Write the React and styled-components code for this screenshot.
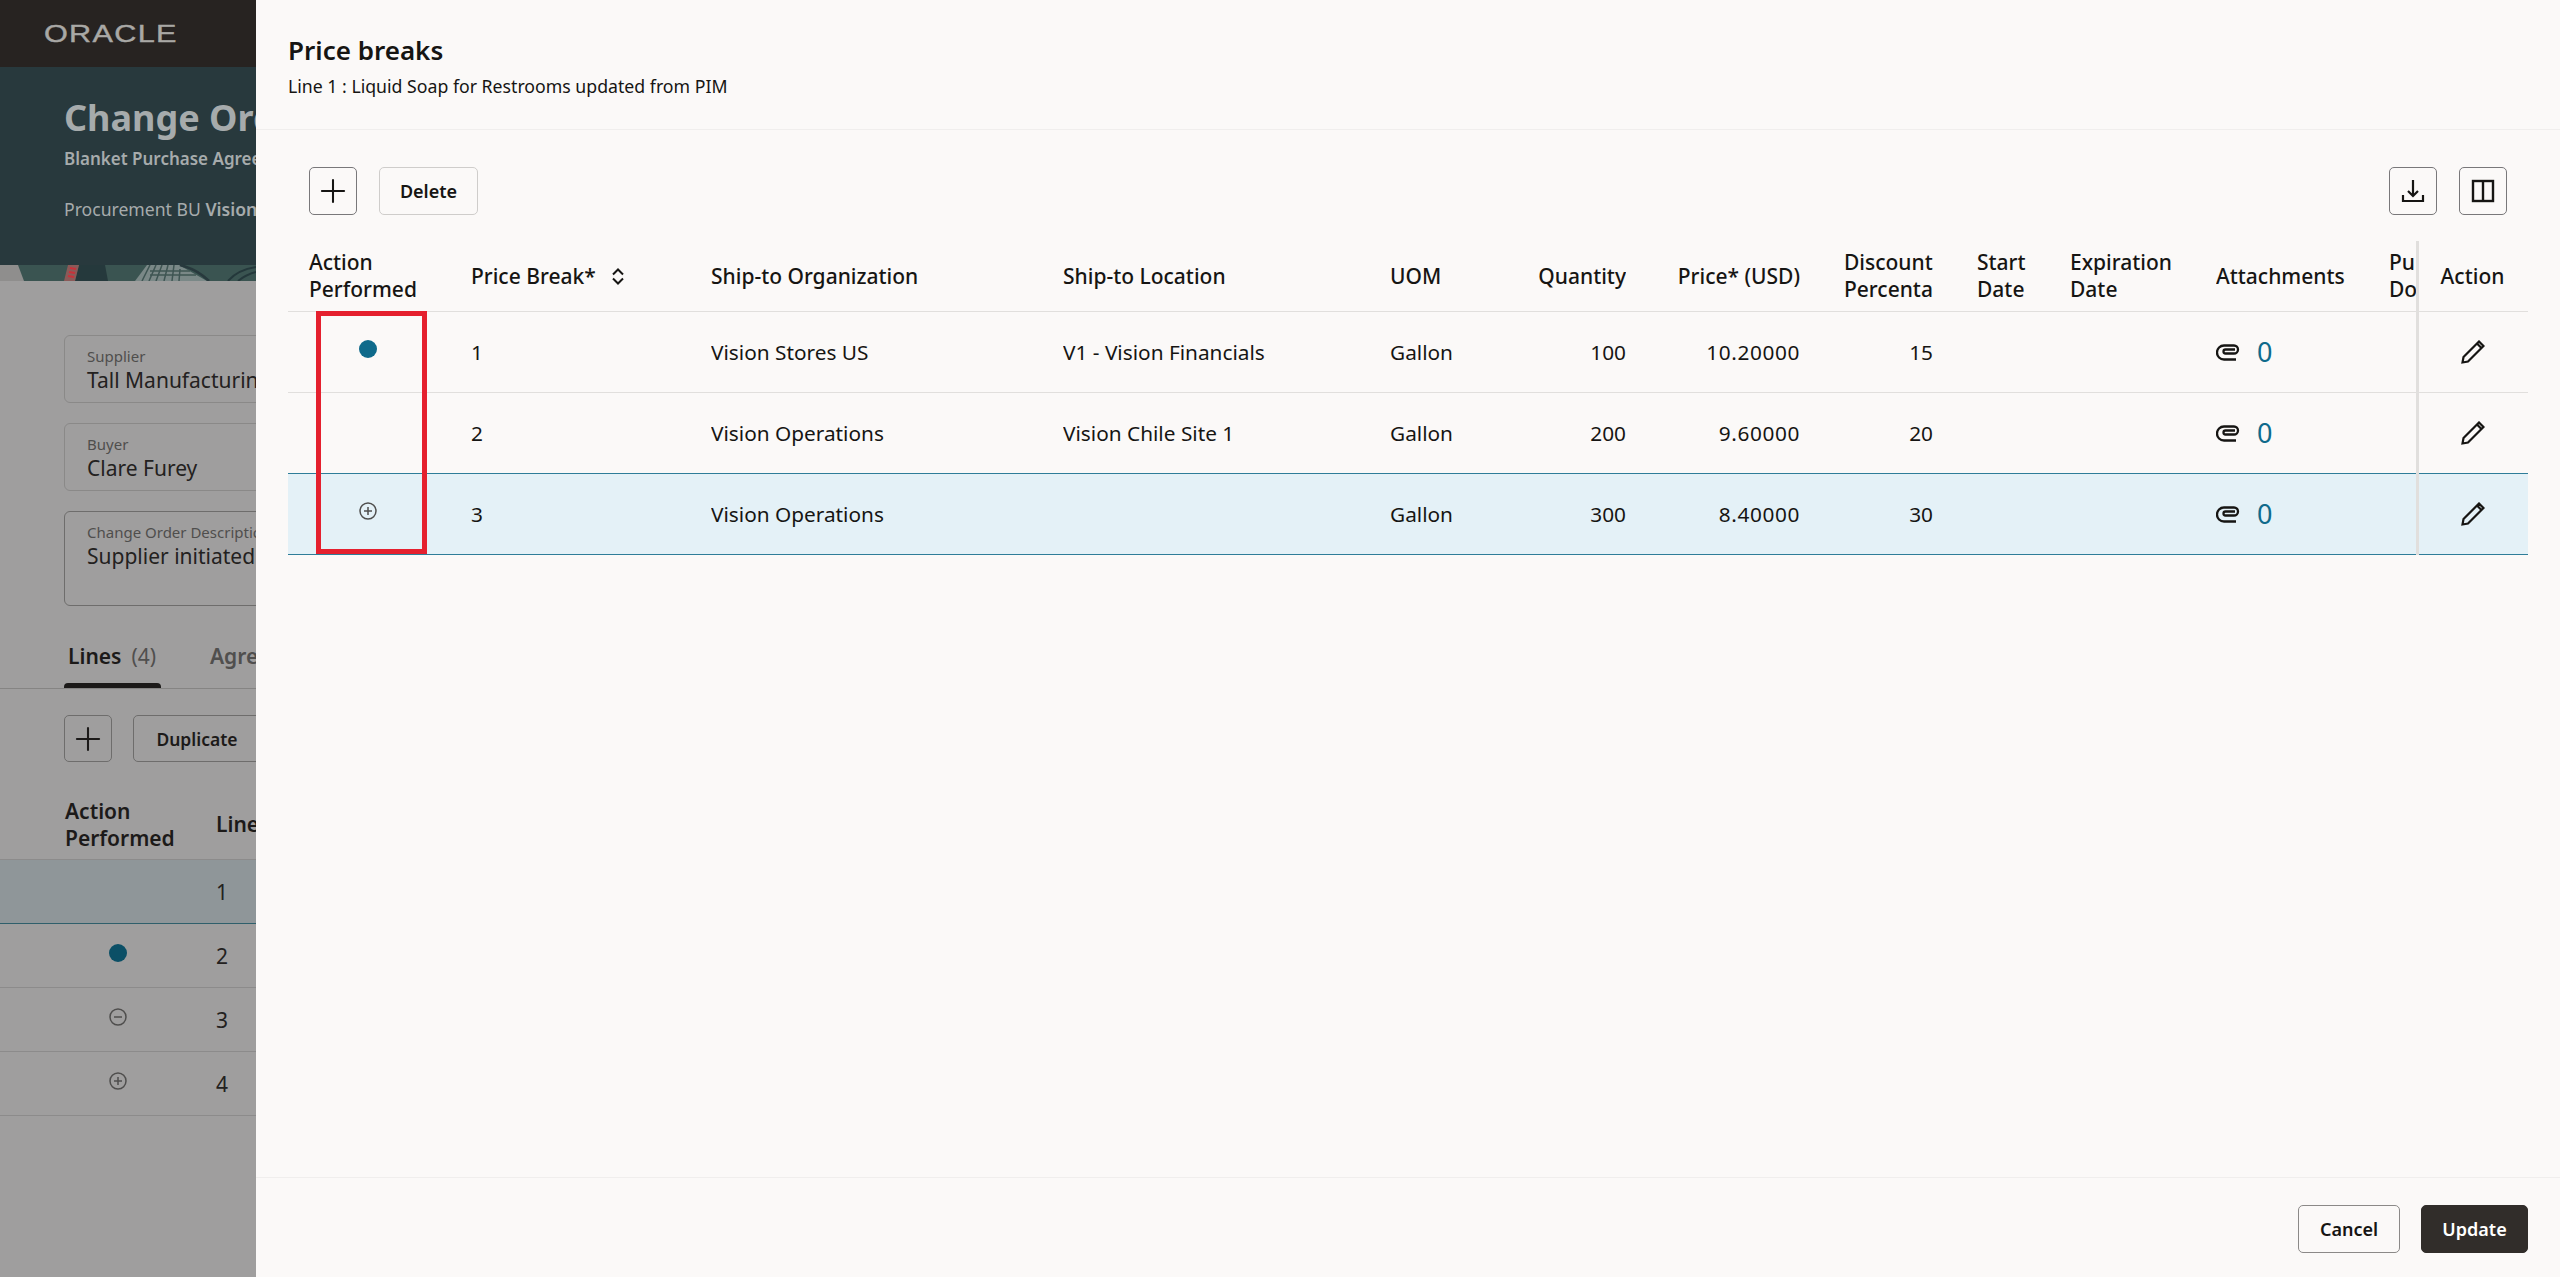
import React from "react";
import styled, { createGlobalStyle } from "styled-components";
import { Plus } from "lucide-react";

const FONT = `"Noto Sans", "Open Sans", "Liberation Sans", sans-serif`;

const GlobalStyle = createGlobalStyle`
  html, body {
    margin: 0;
    padding: 0;
    background: #9f9e9e;
  }
  body {
    font-family: ${FONT};
    color: #161513;
  }
  * {
    box-sizing: border-box;
  }
`;

const Page = styled.div`
  position: relative;
  width: 2560px;
  height: 1277px;
  overflow: hidden;
  background: #9f9e9e;
`;

// dimmed page behind the drawer
const TopBar = styled.div`
  height: 67px;
  background: #272321;
  display: flex;
  align-items: center;
  padding: 2px 0 0 44px;
`;

const Logo = styled.span`
  display: inline-block;
  font-family: "Liberation Sans", sans-serif;
  font-size: 23px;
  line-height: 23px;
  letter-spacing: 1px;
  color: #a9a8a5;
  -webkit-text-stroke: 0.4px #a9a8a5;
  transform: scaleX(1.33);
  transform-origin: left center;
`;

const Hero = styled.div`
  height: 198px;
  background: #28393d;
  padding: 28px 0 0 64px;
  color: #a6abac;
`;

const HeroTitle = styled.div`
  font-size: 36px;
  line-height: 46px;
  font-weight: 700;
  white-space: nowrap;
`;

const HeroSub = styled.div`
  font-size: 17px;
  line-height: 24px;
  font-weight: 600;
  margin-top: 6px;
  white-space: nowrap;
`;

const HeroMeta = styled.div`
  font-size: 17.6px;
  line-height: 24px;
  margin-top: 26px;
  white-space: nowrap;

  b {
    font-weight: 600;
  }
`;

const Strip = styled.svg`
  display: block;
  width: 256px;
  height: 16px;
`;

const Form = styled.div`
  display: flex;
  flex-direction: column;
  gap: 20px;
  padding: 54px 0 0 64px;
`;

const Field = styled.div`
  width: 400px;
  height: ${(p) => p.$h}px;
  border: 1px solid ${(p) => (p.$dark ? "#6e6d6c" : "#8a8988")};
  border-radius: 6px;
  padding: 10px 22px;
`;

const FieldLabel = styled.div`
  font-size: 15px;
  line-height: 20px;
  color: #4f4e4d;
  white-space: nowrap;
`;

const FieldValue = styled.div`
  font-size: 21px;
  line-height: 28px;
  color: #232120;
  white-space: nowrap;
`;

const Tabs = styled.div`
  margin-top: 24px;
  height: 59px;
  display: flex;
  gap: 45px;
  padding: 11px 0 0 64px;
  border-bottom: 1px solid #858483;
`;

const Tab = styled.div`
  position: relative;
  padding: 0 4px;
  font-size: 21px;
  line-height: 30px;
  font-weight: 600;
  color: ${(p) => (p.$active ? "#1c1a19" : "#504f4e")};
  width: ${(p) => (p.$active ? "97px" : "auto")};
  white-space: nowrap;

  span {
    font-weight: 400;
    color: #504f4e;
    margin-left: 10px;
  }

  ${(p) =>
    p.$active &&
    `&:after {
      content: "";
      position: absolute;
      left: 0;
      right: 0;
      bottom: 0;
      height: 5px;
      border-radius: 4px 4px 0 0;
      background: #1c1a19;
    }`}
`;

const BackToolbar = styled.div`
  display: flex;
  gap: 21px;
  padding: 26px 0 0 64px;
`;

const BackButton = styled.div`
  display: flex;
  align-items: center;
  justify-content: center;
  height: 47px;
  width: ${(p) => p.$w}px;
  border: 1px solid #6e6d6c;
  border-radius: 5px;
  font-size: 17.5px;
  font-weight: 600;
  color: #1c1a19;
`;

const BackTable = styled.div`
  margin-top: 28px;
`;

const BackHead = styled.div`
  display: grid;
  grid-template-columns: 151px 1fr;
  align-items: center;
  height: 70px;
  padding-left: 65px;
  font-size: 21px;
  line-height: 27px;
  font-weight: 600;
  color: #1c1a19;
  border-bottom: 1px solid #8c8b8b;
`;

const BackRow = styled.div`
  display: grid;
  grid-template-columns: 216px 40px;
  align-items: center;
  height: 64px;
  background: ${(p) => (p.$sel ? "#8f9699" : "transparent")};
  border-bottom: 1px solid ${(p) => (p.$sel ? "#2f5f6b" : "#8c8b8b")};
  font-size: 21px;
  color: #232120;
`;

const BackMark = styled.div`
  display: flex;
  justify-content: center;
  padding: 0 0 6px 20px;
`;

// drawer
const Drawer = styled.div`
  position: absolute;
  top: 0;
  left: 256px;
  right: 0;
  bottom: 0;
  display: flex;
  flex-direction: column;
  background: #fbf9f8;
`;

const DrawerHeader = styled.div`
  height: 130px;
  padding: 32px 32px 0;
  border-bottom: 1px solid #f0eeed;
`;

const Title = styled.div`
  font-size: 26px;
  line-height: 36px;
  font-weight: 600;
`;

const Subtitle = styled.div`
  font-size: 17.7px;
  line-height: 25px;
  margin-top: 6px;
`;

const DrawerBody = styled.div`
  flex: 1;
  padding: 37px 32px 0;
`;

const Toolbar = styled.div`
  display: flex;
  align-items: center;
  gap: 22px;
  padding: 0 21px;
`;

const Spacer = styled.div`
  flex: 1;
`;

const IconButton = styled.button`
  display: flex;
  align-items: center;
  justify-content: center;
  width: 48px;
  height: 48px;
  padding: 0;
  background: transparent;
  border: 1px solid #79787a;
  border-radius: 5px;
  color: #161513;
`;

const TextButton = styled.button`
  height: 48px;
  width: ${(p) => p.$w}px;
  padding: 0;
  font-family: ${FONT};
  font-size: 18px;
  font-weight: 600;
  border-radius: 5px;
  border: 1px solid ${(p) => (p.$quiet ? "#cfcdcb" : "#8b8988")};
  background: ${(p) => (p.$primary ? "#312d2a" : "transparent")};
  color: ${(p) => (p.$primary ? "#fff" : "#161513")};
  ${(p) => p.$primary && "border-color: #312d2a;"}
`;

const COLS = "183px 240px 352px 327px 136px 100px 174px 133px 137px 146px 173px 28px 111px";

const Table = styled.div`
  position: relative;
  margin-top: 26px;
  width: 2240px;
`;

const HeadRow = styled.div`
  display: grid;
  grid-template-columns: ${COLS};
  align-items: center;
  height: 71px;
  border-bottom: 1px solid #e1dfdd;
  font-size: 21px;
  line-height: 27px;
  font-weight: 500;
`;

const BodyRow = styled.div`
  display: grid;
  grid-template-columns: ${COLS};
  align-items: center;
  height: 81px;
  font-size: 20.8px;
  border-bottom: 1px solid ${(p) => (p.$sel ? "#2e7d99" : "#e1dfdd")};
  background: ${(p) => (p.$sel ? "#e4f1f7" : "transparent")};
  ${(p) => p.$sel && "box-shadow: 0 -1px 0 #2e7d99;"}
`;

const Cell = styled.div`
  padding-left: ${(p) => p.$pl ?? 0}px;
  text-align: ${(p) => (p.$right ? "right" : "left")};
  overflow: hidden;
  white-space: ${(p) => (p.$wrap ? "normal" : "nowrap")};
`;

const PriceCell = styled(Cell)`
  letter-spacing: 0.6px;
`;

const ActionCell = styled.div`
  display: flex;
  justify-content: center;
`;

const SortCell = styled(Cell)`
  display: flex;
  align-items: center;
  gap: 16px;
`;

const MarkCell = styled.div`
  display: flex;
  justify-content: center;
  padding: 0 0 6px 0;
  width: 160px;
`;

const Dot = styled.span`
  display: block;
  width: ${(p) => p.$size}px;
  height: ${(p) => p.$size}px;
  border-radius: 50%;
  background: ${(p) => p.$color};
`;

const AttachCell = styled(Cell)`
  display: flex;
  align-items: center;
  gap: 17px;
`;

const Count = styled.span`
  font-size: 27px;
  line-height: 32px;
  color: #0f6a8b;
`;

const StickyLine = styled.div`
  position: absolute;
  top: 0;
  bottom: 0;
  left: 2128px;
  width: 3px;
  background: #e1dfdd;
`;

const Highlight = styled.div`
  position: absolute;
  left: 28px;
  top: 70px;
  width: 111px;
  height: 243px;
  border: 5px solid #e5202e;
`;

const DrawerFooter = styled.div`
  height: 100px;
  display: flex;
  justify-content: flex-end;
  gap: 21px;
  padding: 27px 32px 0;
  border-top: 1px solid #f0eeed;
`;

const PlusCircle = ({ size = 18, color = "#4f4e4d" }) => (
  <svg width={size} height={size} viewBox="0 0 18 18" fill="none" stroke={color} strokeWidth="1.5">
    <circle cx="9" cy="9" r="8" />
    <path d="M9 5v8M5 9h8" />
  </svg>
);

const MinusCircle = ({ color = "#4f4e4d" }) => (
  <svg width="18" height="18" viewBox="0 0 18 18" fill="none" stroke={color} strokeWidth="1.5">
    <circle cx="9" cy="9" r="8" />
    <path d="M5 9h8" />
  </svg>
);

const SortIcon = () => (
  <svg width="12" height="17" viewBox="0 0 12 17" fill="none" stroke="#161513" strokeWidth="2">
    <path d="M1 6.5L6 1.5l5 5M1 10.5l5 5 5-5" />
  </svg>
);

const DownloadIcon = () => (
  <svg width="24" height="24" viewBox="0 0 24 24" fill="none" stroke="currentColor" strokeWidth="2.2">
    <path d="M12 1v16M7 12l5 5 5-5M2 16v6h20v-6" />
  </svg>
);

const ColumnsIcon = () => (
  <svg width="24" height="24" viewBox="0 0 24 24" fill="none" stroke="currentColor" strokeWidth="2.4">
    <rect x="2" y="2" width="20" height="20" />
    <path d="M12 2v20" />
  </svg>
);

const ClipIcon = () => (
  <svg width="24" height="17" viewBox="0 0 24 17" fill="none" stroke="#161513" strokeWidth="2.3">
    <path d="M20 15.5H8A7 7 0 0 1 8 1.5h10a4 4 0 0 1 0 8H9.5a2 2 0 0 1 0-4H19" />
  </svg>
);

const PencilIcon = () => (
  <svg width="24" height="24" viewBox="0 0 24 24" fill="none" stroke="#161513" strokeWidth="2.2">
    <path d="M1.5 22.5l1-5.5L18 1.5l4.5 4.5L7 21.5z" />
    <path d="M16 3.5l4.5 4.5" />
  </svg>
);

const rows = [
  { n: 1, org: "Vision Stores US", loc: "V1 - Vision Financials", qty: 100, price: "10.20000", disc: 15, mark: "dot" },
  { n: 2, org: "Vision Operations", loc: "Vision Chile Site 1", qty: 200, price: "9.60000", disc: 20 },
  { n: 3, org: "Vision Operations", loc: "", qty: 300, price: "8.40000", disc: 30, mark: "add", sel: true },
];

const backRows = [
  { n: 1, sel: true },
  { n: 2, mark: <Dot $size={18} $color="#0b4f66" /> },
  { n: 3, mark: <MinusCircle /> },
  { n: 4, mark: <PlusCircle /> },
];

function Background() {
  return (
    <>
      <TopBar>
        <Logo>ORACLE</Logo>
      </TopBar>
      <Hero>
        <HeroTitle>Change Order</HeroTitle>
        <HeroSub>Blanket Purchase Agreement</HeroSub>
        <HeroMeta>
          Procurement BU <b>Vision Operations</b>
        </HeroMeta>
      </Hero>
      <Strip viewBox="0 0 256 16" preserveAspectRatio="none">
        <rect width="256" height="16" fill="#3a5451" />
        <path d="M0 0h18l6 16H0z" fill="#8f8e8d" />
        <path d="M79 0h26l3 16H75z" fill="#25393c" />
        <path d="M68 0h11l-4 16H64z" fill="#8b5a58" />
        <path d="M70 3l6 1M69 7l6 1M68 11l6 1" stroke="#c8323b" strokeWidth="2" />
        <path d="M147 0h32l28 16H135z" fill="#7a8887" />
        <path
          d="M150 0l-8 16M156 0l-7 16M162 0l-6 16M168 0l-4 16M174 0l-2 16M180 4l-1 12M150 6h40M150 10h46"
          stroke="#3f5553"
          strokeWidth="1.5"
        />
        <path d="M180 0c12 3 22 9 29 16" fill="none" stroke="#28393d" strokeWidth="2.5" />
        <path d="M228 16c6-7 15-12 28-14M238 16c5-4 10-7 18-9" fill="none" stroke="#24383b" strokeWidth="2" />
      </Strip>
      <Form>
        <Field $h={68}>
          <FieldLabel>Supplier</FieldLabel>
          <FieldValue>Tall Manufacturing</FieldValue>
        </Field>
        <Field $h={68}>
          <FieldLabel>Buyer</FieldLabel>
          <FieldValue>Clare Furey</FieldValue>
        </Field>
        <Field $h={95} $dark>
          <FieldLabel>Change Order Description</FieldLabel>
          <FieldValue>Supplier initiated change</FieldValue>
        </Field>
      </Form>
      <Tabs>
        <Tab $active>
          Lines<span>(4)</span>
        </Tab>
        <Tab>Agreement</Tab>
      </Tabs>
      <BackToolbar>
        <BackButton $w={48}>
          <Plus size={38} strokeWidth={1.3} />
        </BackButton>
        <BackButton $w={128}>Duplicate</BackButton>
      </BackToolbar>
      <BackTable>
        <BackHead>
          <div>
            Action
            <br />
            Performed
          </div>
          <div>Line</div>
        </BackHead>
        {backRows.map((r) => (
          <BackRow key={r.n} $sel={r.sel}>
            <BackMark>{r.mark}</BackMark>
            <div>{r.n}</div>
          </BackRow>
        ))}
      </BackTable>
    </>
  );
}

export default function App() {
  return (
    <Page>
      <GlobalStyle />
      <Background />
      <Drawer>
        <DrawerHeader>
          <Title>Price breaks</Title>
          <Subtitle>Line 1 : Liquid Soap for Restrooms updated from PIM</Subtitle>
        </DrawerHeader>
        <DrawerBody>
          <Toolbar>
            <IconButton>
              <Plus size={38} strokeWidth={1.3} />
            </IconButton>
            <TextButton $w={99} $quiet>
              Delete
            </TextButton>
            <Spacer />
            <IconButton>
              <DownloadIcon />
            </IconButton>
            <IconButton>
              <ColumnsIcon />
            </IconButton>
          </Toolbar>
          <Table>
            <HeadRow>
              <Cell $pl={21} $wrap>
                Action Performed
              </Cell>
              <SortCell>
                Price Break*
                <SortIcon />
              </SortCell>
              <Cell>Ship-to Organization</Cell>
              <Cell>Ship-to Location</Cell>
              <Cell>UOM</Cell>
              <Cell $right>Quantity</Cell>
              <Cell $right>Price* (USD)</Cell>
              <Cell $pl={44}>
                Discount
                <br />
                Percentage
              </Cell>
              <Cell $pl={44}>
                Start
                <br />
                Date
              </Cell>
              <Cell>
                Expiration
                <br />
                Date
              </Cell>
              <Cell>Attachments</Cell>
              <Cell>
                Purchase
                <br />
                Document
              </Cell>
              <ActionCell>Action</ActionCell>
            </HeadRow>
            {rows.map((r) => (
              <BodyRow key={r.n} $sel={r.sel}>
                <MarkCell>
                  {r.mark === "dot" && <Dot $size={18} $color="#0f6a8b" />}
                  {r.mark === "add" && <PlusCircle />}
                </MarkCell>
                <Cell>{r.n}</Cell>
                <Cell>{r.org}</Cell>
                <Cell>{r.loc}</Cell>
                <Cell>Gallon</Cell>
                <Cell $right>{r.qty}</Cell>
                <PriceCell $right>{r.price}</PriceCell>
                <Cell $right>{r.disc}</Cell>
                <Cell />
                <Cell />
                <AttachCell>
                  <ClipIcon />
                  <Count>0</Count>
                </AttachCell>
                <Cell />
                <ActionCell>
                  <PencilIcon />
                </ActionCell>
              </BodyRow>
            ))}
            <StickyLine />
            <Highlight />
          </Table>
        </DrawerBody>
        <DrawerFooter>
          <TextButton $w={102}>Cancel</TextButton>
          <TextButton $w={107} $primary>
            Update
          </TextButton>
        </DrawerFooter>
      </Drawer>
    </Page>
  );
}
